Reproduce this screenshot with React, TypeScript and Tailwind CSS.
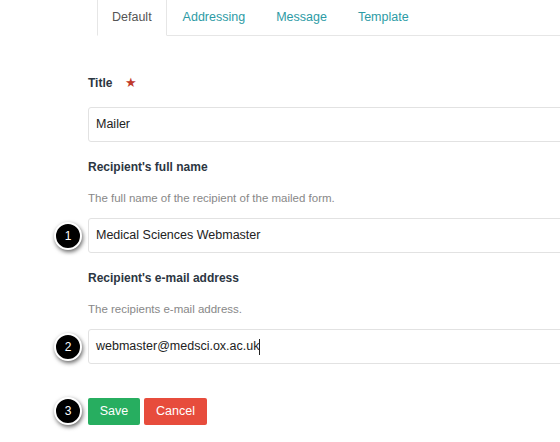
import React from "react";

function Badge({ n }: { n: number }) {
  return (
    <div className="w-[28px] h-[28px] rounded-full bg-black border-2 border-white shadow-[1px_2px_4px_rgba(0,0,0,0.6)] flex items-center justify-center text-white text-[12px] shrink-0">
      {n}
    </div>
  );
}

function Input({ value, caret }: { value: string; caret?: boolean }) {
  return (
    <div className="h-[35px] w-[500px] shrink-0 border border-[#e2e2e2] rounded-[3px] flex items-center pl-[7px] text-[12.5px] text-[#222] bg-white">
      {value}
      {caret && <span className="inline-block w-px h-[16px] bg-[#222]" />}
    </div>
  );
}

export default function App() {
  return (
    <div
      className="w-[560px] h-[442px] bg-white overflow-hidden relative"
      style={{ fontFamily: '"Liberation Sans", Arial, sans-serif' }}
    >
      <div className="flex h-[36px] ml-[97px] border-b border-[#e6e6e6]">
        <div className="h-[37px] -mt-[1px] px-[14px] border border-[#e6e6e6] border-b-white bg-white flex items-center text-[12.5px] text-[#555] pb-[1px]">
          Default
        </div>
        <div className="flex items-center text-[12.5px] text-[#2d9ba5] pl-[16px] gap-[31px] pb-[1px]">
          <span>Addressing</span>
          <span>Message</span>
          <span>Template</span>
        </div>
      </div>

      <div className="ml-[88px] mt-[39px] h-[16px] flex items-center gap-[13px] text-[12px] font-bold text-[#2c3642]">
        <span>Title</span>
        <span className="text-[#c0392b] text-[13px] font-normal">★</span>
      </div>
      <div className="ml-[88px] mt-[16px] flex">
        <Input value="Mailer" />
      </div>

      <div className="ml-[88px] mt-[17px] h-[16px] leading-[16px] text-[12px] font-bold text-[#2c3642]">Recipient's full name</div>
      <div className="ml-[88px] mt-[16px] h-[14px] leading-[14px] text-[11.5px] text-[#888]">The full name of the recipient of the mailed form.</div>
      <div className="ml-[54px] mt-[13px] flex items-center gap-[6px]">
        <Badge n={1} />
        <Input value="Medical Sciences Webmaster" />
      </div>

      <div className="ml-[88px] mt-[17px] h-[16px] leading-[16px] text-[12px] font-bold text-[#2c3642]">Recipient's e-mail address</div>
      <div className="ml-[88px] mt-[16px] h-[14px] leading-[14px] text-[11.5px] text-[#888]">The recipients e-mail address.</div>
      <div className="ml-[54px] mt-[13px] flex items-center gap-[6px]">
        <Badge n={2} />
        <Input value="webmaster@medsci.ox.ac.uk" caret />
      </div>

      <div className="ml-[54px] mt-[33px] flex items-center gap-[6px]">
        <Badge n={3} />
        <div className="flex gap-[4px]">
          <div className="h-[27px] w-[52px] bg-[#27ae60] rounded-[2px] text-white text-[12.5px] flex items-center justify-center">Save</div>
          <div className="h-[27px] w-[63px] bg-[#e74c3c] rounded-[2px] text-white text-[12.5px] flex items-center justify-center">Cancel</div>
        </div>
      </div>
    </div>
  );
}
